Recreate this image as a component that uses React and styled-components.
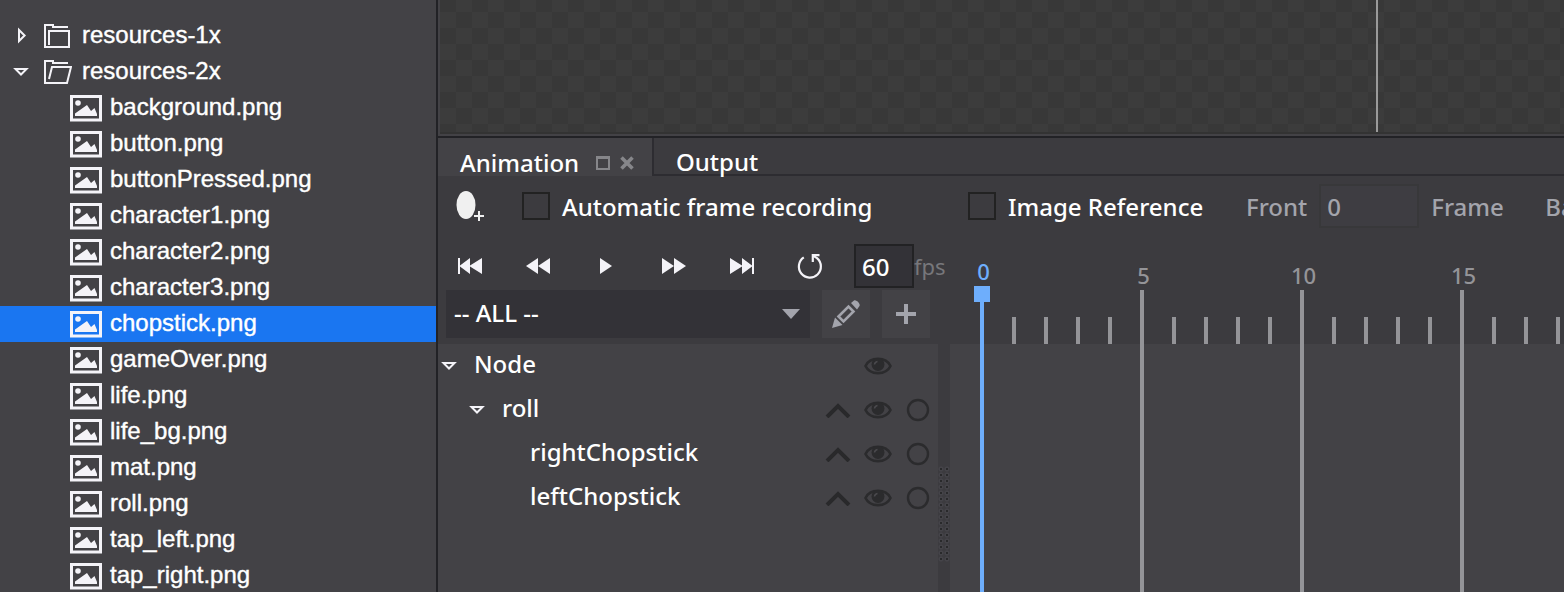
import React from "react";
import styled, { createGlobalStyle, css } from "styled-components";

const UI = `"Noto Sans", "Open Sans", sans-serif`;
const SIDE = `"Liberation Sans", Arial, sans-serif`;

const Global = createGlobalStyle`
  * { box-sizing: border-box; }
  html, body, #root { height: 100%; }
  body { margin: 0; background: #434246; color: #fff; font-family: ${UI}; font-size: 24px; font-weight: 500; overflow: hidden; }
  button, input, select { font: inherit; color: inherit; }
  svg { display: block; flex: none; }
`;

const Shell = styled.div`
  display: flex;
  height: 100vh;
  overflow: hidden;
`;

const Sidebar = styled.aside`
  flex: none;
  width: 438px;
  padding-top: 18px;
  background: #434246;
  border-right: 2px solid #222226;
  font-family: ${SIDE};
  font-weight: 400;
  overflow: hidden;
`;

const List = styled.ul`
  list-style: none;
  margin: 0;
  padding: 0;
`;

const FileRow = styled.li`
  display: flex;
  align-items: center;
  height: 36px;
  gap: ${(p) => (p.$folder ? "10px" : "8px")};
  padding-left: ${(p) => (p.$folder ? "12px" : "70px")};
  background: ${(p) => (p.$selected ? "#1a76f1" : "transparent")};
  line-height: 34px;
  white-space: nowrap;
  -webkit-text-stroke: 0.4px #fff;
`;

const FileName = styled.span`
  height: 36px;
`;

const Main = styled.main`
  flex: 1;
  min-width: 0;
  display: flex;
  flex-direction: column;
`;

const Stage = styled.section`
  flex: none;
  display: flex;
  justify-content: flex-end;
  height: 134px;
  margin-left: 2px;
  padding-right: 186px;
  border-bottom: 2px solid #333333;
  background: repeating-conic-gradient(#3c3c3c 0 25%, #383838 0 50%) 0 -4px / 32px 32px;
`;

const Guide = styled.div`
  width: 2px;
  background: #9a9a9a;
`;

const Panel = styled.section`
  flex: 1;
  min-height: 0;
  display: flex;
  flex-direction: column;
  margin-top: 2px;
  border-top: 2px solid #222226;
  background: #3c3b3f;
`;

const Tabs = styled.div`
  flex: none;
  display: flex;
  height: 38px;
`;

const Tab = styled.div`
  display: flex;
  align-items: center;
  gap: 10px;
  padding: 12px 18px 0 22px;
  line-height: 28px;
  ${(p) =>
    p.$active
      ? css`
          width: 216px;
          background: #434246;
          border-right: 2px solid #2d2c31;
        `
      : css`
          flex: 1;
          border-bottom: 2px solid #2d2c31;
        `}
`;

const TabButton = styled.button`
  width: ${(p) => (p.$active ? "126px" : "auto")};
  height: 28px;
  padding: 0;
  border: 0;
  background: none;
  line-height: 28px;
  text-align: left;
`;

const IconButton = styled.button`
  display: flex;
  align-items: center;
  justify-content: ${(p) => (p.$start ? "flex-start" : "center")};
  flex: none;
  width: ${(p) => p.$w || 28}px;
  height: ${(p) => p.$h || 28}px;
  padding: 0 0 0 ${(p) => p.$pad || 0}px;
  border: 0;
  background: ${(p) => (p.$filled ? "#434246" : "none")};
`;

const Options = styled.div`
  flex: none;
  display: flex;
  align-items: center;
  height: 62px;
  padding: 0 0 2px 18px;
  white-space: nowrap;
  overflow: hidden;
`;

const CheckLabel = styled.label`
  flex: none;
  display: flex;
  align-items: center;
  gap: 12px;
  width: ${(p) => p.$w}px;
`;

const Check = styled.input`
  appearance: none;
  flex: none;
  width: 28px;
  height: 28px;
  margin: 0;
  border: 2px solid #222222;
`;

const Field = styled.label`
  flex: none;
  display: flex;
  align-items: center;
  gap: 12px;
  margin-right: 12px;
  color: #a3a4ac;
`;

const Suffix = styled.span`
  flex: none;
  width: 114px;
  color: #a3a4ac;
`;

const NumberBox = styled.input`
  flex: none;
  width: ${(p) => p.$w}px;
  height: 44px;
  padding: 0 6px;
  border: 2px solid ${(p) => (p.$dim ? "#38383a" : "#222224")};
  border-radius: 0;
  background: ${(p) => (p.$dim ? "#3e3d42" : "#333237")};
`;

const Workspace = styled.div`
  flex: 1;
  min-height: 0;
  display: flex;
`;

const Left = styled.div`
  flex: none;
  width: 500px;
  display: flex;
  flex-direction: column;
`;

const Playback = styled.div`
  flex: none;
  display: flex;
  align-items: center;
  height: 52px;
  padding: 4px 0 0 12px;
`;

const Transport = styled.div`
  flex: none;
  display: flex;
  width: 404px;
`;

const Fps = styled.label`
  display: flex;
  align-items: center;
  color: #77777b;
  font-size: 22px;
  font-weight: 400;

  input {
    color: #fff;
    font-size: 24px;
    font-weight: 500;
  }
`;

const Picker = styled.div`
  flex: none;
  display: flex;
  gap: 12px;
  height: 54px;
  padding: 0 8px 6px;
`;

const SelectWrap = styled.div`
  flex: 1;
  display: grid;
  align-items: center;
  background: #333237;

  > * { grid-area: 1 / 1; }
  > svg { justify-self: end; margin-right: 10px; pointer-events: none; }
`;

const Select = styled.select`
  appearance: none;
  width: 100%;
  height: 48px;
  padding: 0 8px 4px;
  border: 0;
  background: none;
`;

const Tree = styled.ul`
  flex: 1;
  list-style: none;
  margin: 0;
  padding: 0;
  background: #434246;
`;

const TreeRow = styled.li`
  display: flex;
  align-items: center;
  height: 44px;
  padding-left: ${(p) => 2 + p.$depth * 28}px;
`;

const Twisty = styled.span`
  width: 34px;
`;

const NodeName = styled.span`
  flex: 1;
  height: 44px;
  line-height: 40px;
`;

const RowIcon = styled.span`
  display: flex;
  justify-content: center;
  width: 40px;
`;

const Splitter = styled.div`
  flex: none;
  width: 12px;
  padding-top: 228px;
`;

const Grip = styled.div`
  height: 96px;
  background: radial-gradient(circle at 3px 3px, #29292b 0 1px, #454449 1px 2px, transparent 3px) 0 0 / 6px 6px;
`;

const Timeline = styled.div`
  flex: 1;
  min-width: 0;
  display: flex;
  padding-left: 16px;
  overflow: hidden;
  background: linear-gradient(#3c3b3f 106px, #434246 106px);
`;

const Frame = styled.div`
  flex: none;
  display: flex;
  flex-direction: column;
  align-items: center;
  width: 32px;
`;

const FrameLabel = styled.span`
  display: flex;
  align-items: flex-end;
  height: ${(p) => (p.$current ? 48 : 52)}px;
  padding: 0 0 1px 3px;
  font-size: 22px;
  line-height: 28px;
  color: ${(p) => (p.$current ? "#6eaefc" : "#949498")};
`;

const Playhead = styled.span`
  width: 16px;
  height: 16px;
  background: #6eaefc;
`;

const Tick = styled.span`
  width: 4px;
  background: ${(p) => (p.$current ? "#6eaefc" : "#949498")};
  ${(p) =>
    p.$minor
      ? css`
          height: 27px;
          margin-top: 79px;
        `
      : css`
          flex: 1;
        `}
`;

const ArrowRight = () => (
  <svg width="20" height="18" viewBox="0 0 20 18" fill="none" stroke="#f4f3f8" strokeWidth="2">
    <path d="M7 3V14L12.600 8.500Z" />
  </svg>
);

const ArrowDown = () => (
  <svg width="20" height="18" viewBox="0 0 20 18" fill="none" stroke="#f4f3f8" strokeWidth="2">
    <path d="M3.500 6H14.500L9 11.500Z" />
  </svg>
);

const FolderClosed = () => (
  <svg width="30" height="28" viewBox="0 0 30 28" fill="none" stroke="#f4f3f8" strokeWidth="2">
    <path d="M26 5H11V3H3V25H27V9H7V23" />
  </svg>
);

const FolderOpen = () => (
  <svg width="30" height="28" viewBox="0 0 30 28" fill="none" stroke="#f4f3f8" strokeWidth="2">
    <path d="M26 5H11V3H3V25H25L29 9H10L7 21" />
  </svg>
);

const ImageIcon = () => (
  <svg width="32" height="28" viewBox="0 0 32 28">
    <rect x="1.500" y="2.500" width="29" height="23.500" fill="none" stroke="#f4f3f8" strokeWidth="3" />
    <circle cx="8" cy="9" r="2.800" fill="#f4f3f8" />
    <path d="M5 22V19.500L17 11L21 17L24.500 14L27 20V22Z" fill="#f4f3f8" />
  </svg>
);

const FloatIcon = () => (
  <svg width="14" height="14" viewBox="0 0 14 14" fill="none" stroke="#86868a" strokeWidth="2">
    <path d="M1 2H13V13H1Z" />
    <path d="M0 1.500H14" strokeWidth="3" />
  </svg>
);

const CloseIcon = () => (
  <svg width="14" height="14" viewBox="0 0 14 14" stroke="#86868a" strokeWidth="3.600">
    <path d="M1.500 1.500L12.500 12.500M12.500 1.500L1.500 12.500" />
  </svg>
);

const KeyframeIcon = () => (
  <svg width="28" height="34" viewBox="0 0 28 34">
    <ellipse cx="10" cy="16" rx="9.500" ry="14" fill="#f0f0f0" />
    <path d="M18 27H28M23 22V32" stroke="#f0f0f0" strokeWidth="2" />
  </svg>
);

const transport = [
  { label: "First frame", d: "M0 0H2V7.500L12 0V7.500L24 0V16L12 8.500V16L2 8.500V16H0Z" },
  { label: "Previous frame", d: "M0 8L12 0V8L24 0V16L12 8V16Z" },
  { label: "Play", d: "M6 0L18 8L6 16Z" },
  { label: "Next frame", d: "M0 0L12 8V0L24 8L12 16V8L0 16Z" },
  { label: "Last frame", d: "M0 0L12 7.500V0L22 7.500V0H24V16H22V8.500L12 16V8.500L0 16Z" },
];

const TransportIcon = ({ d }) => (
  <svg width="24" height="16" viewBox="0 0 24 16" fill="#f4f3f8">
    <path d={d} />
  </svg>
);

const LoopIcon = () => (
  <svg width="26" height="26" viewBox="0 0 26 26" fill="none" stroke="#f4f3f8" strokeWidth="2.200">
    <path d="M6.800 4.400A11 11 0 1 0 20 5.200L16 2.600" />
    <path d="M15.800 9V2.200H22.500" />
  </svg>
);

const Caret = () => (
  <svg width="18" height="10" viewBox="0 0 18 10" fill="#a3a4ac">
    <path d="M0 0H18L9 10Z" />
  </svg>
);

const PencilIcon = () => (
  <svg width="30" height="30" viewBox="0 0 30 30" fill="#a3a4ac">
    <path d="M1 29L4 18.500L11.500 26Z" />
    <path d="M7.500 17.500L17.500 7.500L22.500 12.500L12.500 22.500Z" fill="none" stroke="#a3a4ac" strokeWidth="2.600" />
    <path d="M20 4L23 1.500C25 0 30 5 28.500 7L26 10.500Z" />
  </svg>
);

const PlusIcon = () => (
  <svg width="20" height="20" viewBox="0 0 20 20" stroke="#a3a4ac" strokeWidth="4">
    <path d="M0 10H20M10 0V20" />
  </svg>
);

const ChevronUp = () => (
  <svg width="26" height="16" viewBox="0 0 26 16" fill="none" stroke="#29292b" strokeWidth="4">
    <path d="M2 15L13 4L24 15" />
  </svg>
);

const EyeIcon = () => (
  <svg width="28" height="18" viewBox="0 0 28 18">
    <path d="M1.500 9C6 -.5 22 -.5 26.500 9C22 18.500 6 18.500 1.500 9Z" fill="none" stroke="#2b2b2d" strokeWidth="2.600" />
    <circle cx="14" cy="7.500" r="6.500" fill="#2b2b2d" />
    <path d="M10.500 7.500A3.500 3.500 0 0 1 13.500 4.500" fill="none" stroke="#4b4a4e" strokeWidth="1.600" />
  </svg>
);

const RingIcon = () => (
  <svg width="24" height="24" viewBox="0 0 24 24" fill="none" stroke="#2b2b2d" strokeWidth="2.400">
    <circle cx="12" cy="12" r="10" />
  </svg>
);

const folders = [
  { name: "resources-1x", open: false },
  { name: "resources-2x", open: true },
];

const files = [
  "background.png",
  "button.png",
  "buttonPressed.png",
  "character1.png",
  "character2.png",
  "character3.png",
  "chopstick.png",
  "gameOver.png",
  "life.png",
  "life_bg.png",
  "mat.png",
  "roll.png",
  "tap_left.png",
  "tap_right.png",
];

const nodes = [
  { name: "Node", depth: 0, open: true, root: true },
  { name: "roll", depth: 1, open: true },
  { name: "rightChopstick", depth: 2 },
  { name: "leftChopstick", depth: 2 },
];

const frames = Array.from({ length: 20 }, (_, i) => i);

export default function App() {
  return (
    <>
      <Global />
      <Shell>
        <Sidebar>
          <List>
            {folders.map((f) => (
              <FileRow key={f.name} $folder>
                {f.open ? <ArrowDown /> : <ArrowRight />}
                {f.open ? <FolderOpen /> : <FolderClosed />}
                <FileName>{f.name}</FileName>
              </FileRow>
            ))}
            {files.map((name) => (
              <FileRow key={name} $selected={name === "chopstick.png"}>
                <ImageIcon />
                <FileName>{name}</FileName>
              </FileRow>
            ))}
          </List>
        </Sidebar>
        <Main>
          <Stage>
            <Guide />
          </Stage>
          <Panel>
            <Tabs>
              <Tab $active>
                <TabButton $active>Animation</TabButton>
                <IconButton $w={14} aria-label="Float panel"><FloatIcon /></IconButton>
                <IconButton $w={14} aria-label="Close panel"><CloseIcon /></IconButton>
              </Tab>
              <Tab>
                <TabButton>Output</TabButton>
              </Tab>
            </Tabs>
            <Options>
              <IconButton $w={66} $h={34} $start aria-label="Add keyframe"><KeyframeIcon /></IconButton>
              <CheckLabel $w={446}>
                <Check type="checkbox" />
                Automatic frame recording
              </CheckLabel>
              <CheckLabel $w={278}>
                <Check type="checkbox" />
                Image Reference
              </CheckLabel>
              <Field>
                Front
                <NumberBox type="text" $w={100} $dim defaultValue="0" />
              </Field>
              <Suffix>Frame</Suffix>
              <Field>
                Back
                <NumberBox type="text" $w={100} $dim defaultValue="0" />
              </Field>
            </Options>
            <Workspace>
              <Left>
                <Playback>
                  <Transport>
                    {transport.map((t) => (
                      <IconButton key={t.label} $w={68} $pad={8} $start aria-label={t.label}>
                        <TransportIcon d={t.d} />
                      </IconButton>
                    ))}
                    <IconButton $w={40} aria-label="Loop"><LoopIcon /></IconButton>
                  </Transport>
                  <Fps>
                    <NumberBox type="text" $w={60} defaultValue="60" />
                    fps
                  </Fps>
                </Playback>
                <Picker>
                  <SelectWrap>
                    <Select aria-label="Animation clip" defaultValue="all">
                      <option value="all">-- ALL --</option>
                    </Select>
                    <Caret />
                  </SelectWrap>
                  <IconButton $w={48} $h={48} $filled aria-label="Edit clip"><PencilIcon /></IconButton>
                  <IconButton $w={48} $h={48} $filled aria-label="Add clip"><PlusIcon /></IconButton>
                </Picker>
                <Tree>
                  {nodes.map((n) => (
                    <TreeRow key={n.name} $depth={n.depth}>
                      <Twisty>{n.open && <ArrowDown />}</Twisty>
                      <NodeName>{n.name}</NodeName>
                      {!n.root && <RowIcon><ChevronUp /></RowIcon>}
                      <RowIcon><EyeIcon /></RowIcon>
                      <RowIcon>{!n.root && <RingIcon />}</RowIcon>
                    </TreeRow>
                  ))}
                </Tree>
              </Left>
              <Splitter>
                <Grip />
              </Splitter>
              <Timeline>
                {frames.map((n) => (
                  <Frame key={n}>
                    {n % 5 === 0 && <FrameLabel $current={n === 0}>{n}</FrameLabel>}
                    {n === 0 && <Playhead />}
                    <Tick $current={n === 0} $minor={n % 5 !== 0} />
                  </Frame>
                ))}
              </Timeline>
            </Workspace>
          </Panel>
        </Main>
      </Shell>
    </>
  );
}
